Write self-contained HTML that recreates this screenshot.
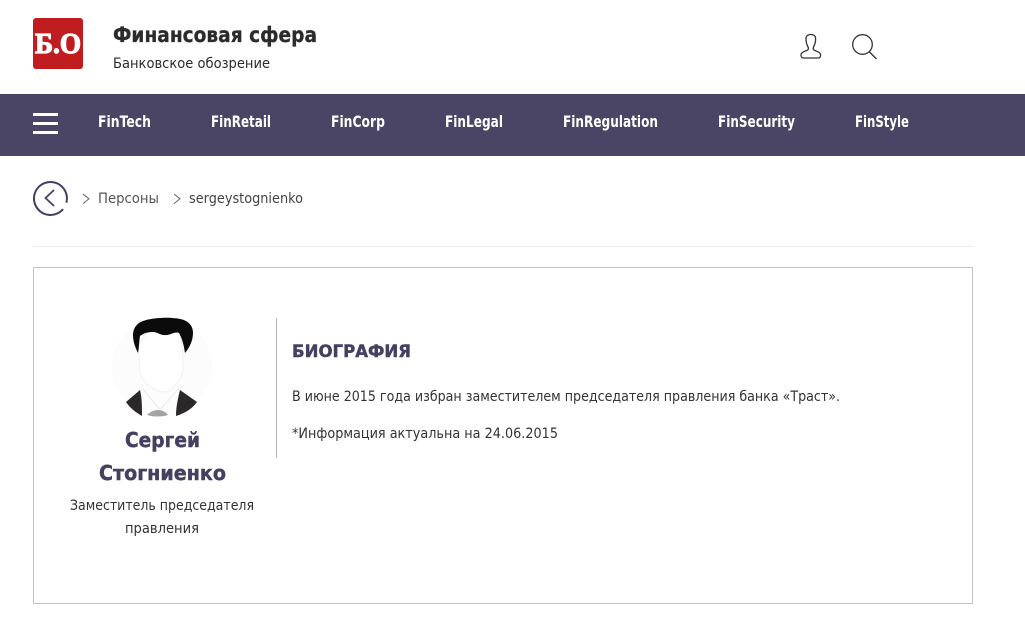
<!DOCTYPE html>
<html lang="ru"><head><meta charset="utf-8"><title>Сергей Стогниенко</title>
<style>
html,body{margin:0;padding:0;background:#fff;width:1025px;height:619px;overflow:hidden}
svg{display:block}
text{font-family:"DejaVu Sans","Liberation Sans",sans-serif;white-space:pre}
.r{fill:#333;font-size:14.5px}
.n{fill:#fff;font-size:16px;font-weight:bold}
.h{fill:#454060;font-weight:bold;stroke:#454060;stroke-width:.45px}
</style></head><body>
<svg xmlns="http://www.w3.org/2000/svg" width="1025" height="619" viewBox="0 0 1025 619">
<rect width="1025" height="619" fill="#fff"/>
<rect x="33" y="18" width="50" height="51" rx="3" fill="#bf1d1f"/>
<text x="35" y="53" style="font-family:'Liberation Serif',serif;font-size:29px;font-weight:bold;stroke:#fff;stroke-width:1.2px" fill="#fff" textLength="46" lengthAdjust="spacingAndGlyphs">Б.О</text>
<text x="113" y="42" style="font-size:21px;font-weight:bold;stroke:#2b2b2b;stroke-width:.3px" fill="#2b2b2b" textLength="204" lengthAdjust="spacingAndGlyphs">Финансовая сфера</text>
<text x="113" y="68" class="r" style="fill:#2b2b2b" textLength="157" lengthAdjust="spacingAndGlyphs">Банковское обозрение</text>
<g fill="none" stroke="#333" stroke-width="1.3">
<path d="M806 38.500c0-2.500 2-4 4.800-4s4.800 1.500 4.800 4c0 3-.7 6-1.800 8-.9 1.600-.7 3 .5 3.700 2 1 5.700 1.700 6.200 4 .5 2-.5 3.800-2.200 3.800h-15c-1.700 0-2.700-1.800-2.200-3.800.5-2.300 4.200-3 6.200-4 1.200-.7 1.400-2.100.5-3.700-1.100-2-1.800-5-1.800-8z"/>
<circle cx="862.500" cy="44.500" r="9.800"/>
<path d="M869.500 52l7 7"/>
</g>
<rect y="94" width="1025" height="62" fill="#4a4565"/>
<rect x="33" y="113" width="25" height="3" fill="#fff"/>
<rect x="33" y="122" width="25" height="3" fill="#fff"/>
<rect x="33" y="131" width="25" height="3" fill="#fff"/>
<text class="n" x="98" y="127" textLength="53" lengthAdjust="spacingAndGlyphs">FinTech</text>
<text class="n" x="211" y="127" textLength="60" lengthAdjust="spacingAndGlyphs">FinRetail</text>
<text class="n" x="331" y="127" textLength="54" lengthAdjust="spacingAndGlyphs">FinCorp</text>
<text class="n" x="445" y="127" textLength="58" lengthAdjust="spacingAndGlyphs">FinLegal</text>
<text class="n" x="563" y="127" textLength="95" lengthAdjust="spacingAndGlyphs">FinRegulation</text>
<text class="n" x="718" y="127" textLength="77" lengthAdjust="spacingAndGlyphs">FinSecurity</text>
<text class="n" x="855" y="127" textLength="54" lengthAdjust="spacingAndGlyphs">FinStyle</text>
<path d="M66.400 202.800A16.500 16.500 0 1 0 63.100 209.100" fill="none" stroke="#454060" stroke-width="2"/>
<path d="M54 190l-8.500 8 8.500 8" fill="none" stroke="#454060" stroke-width="1.800"/>
<path d="M83 194l6 4.800-6 4.800M174 194l6 4.800-6 4.800" fill="none" stroke="#666" stroke-width="1"/>
<text class="r" x="98" y="203" style="fill:#555" textLength="61" lengthAdjust="spacingAndGlyphs">Персоны</text>
<text class="r" x="189" y="203" style="fill:#444" textLength="114" lengthAdjust="spacingAndGlyphs">sergeystognienko</text>
<rect x="33" y="246" width="940" height="1" fill="#ececec"/>
<rect x="33.500" y="267.500" width="939" height="336" fill="#fff" stroke="#c4c2c2"/>
<circle cx="162" cy="367" r="50" fill="#fcfcfc"/>
<path d="M139 345c0 12 0 22 1 28 3 8 8 13 13 15 3 2 7 4 10 4 5 0 9-3 12-7 4-4 7-9 8-15 0-8 0-17-1-25l-2-14-32 0z" fill="#fff" stroke="#f0f0f2"/>
<path d="M142 388l18 22 19-22" fill="none" stroke="#ebebee"/>
<path d="M138 353c-3-6-5-12-5-18 0-5 2-9 6-12 9-6 38-7 47-2 5 3 7 7 7 12 0 7-3 14-8 20-1-6-2-13-6-20-4-2-8 2-13 2-5 1-8-3-13-3-5 0-9 1-13 4-1 6-1 12-2 17z" fill="#0b0b0b"/>
<path d="M140 390l-14 12c4 6 9 10 16 14 0-9 0-18-2-26zM180 390l17 12c-5 7-12 11-21 14 0-9 2-18 4-26z" fill="#2a2828"/>
<path d="M147 415c3-3 7-5 11-5s8 2 10 5c-6 2-15 2-21 0z" fill="#a3a3a3"/>
<rect x="276" y="318" width="1" height="140" fill="#bbb"/>
<text class="h" x="125" y="447" style="font-size:20px" textLength="75" lengthAdjust="spacingAndGlyphs">Сергей</text>
<text class="h" x="99" y="480" style="font-size:20px" textLength="127" lengthAdjust="spacingAndGlyphs">Стогниенко</text>
<text class="r" x="70" y="510" textLength="184" lengthAdjust="spacingAndGlyphs">Заместитель председателя</text>
<text class="r" x="125" y="533" textLength="74" lengthAdjust="spacingAndGlyphs">правления</text>
<text class="h" x="292" y="357" style="font-size:17px" textLength="119" lengthAdjust="spacingAndGlyphs">БИОГРАФИЯ</text>
<text class="r" x="292" y="401" textLength="548" lengthAdjust="spacingAndGlyphs">В июне 2015 года избран заместителем председателя правления банка «Траст».</text>
<text class="r" x="292" y="438" textLength="266" lengthAdjust="spacingAndGlyphs">*Информация актуальна на 24.06.2015</text>
</svg>
</body></html>
